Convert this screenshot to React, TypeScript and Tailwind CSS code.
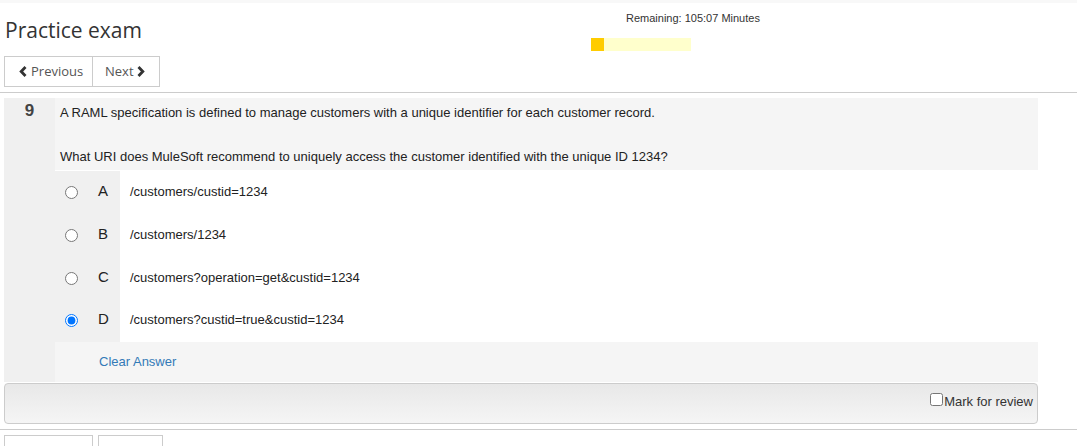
const ChevronLeft = () => (
  <svg width="8" height="11" viewBox="0 0 8 11" className="inline-block">
    <path d="M6.5 1 L2.2 5.5 L6.5 10" fill="none" stroke="#333" strokeWidth="2.8" />
  </svg>
);

const ChevronRight = () => (
  <svg width="8" height="11" viewBox="0 0 8 11" className="inline-block">
    <path d="M1.5 1 L5.8 5.5 L1.5 10" fill="none" stroke="#333" strokeWidth="2.8" />
  </svg>
);

const options = [
  { letter: "A", text: "/customers/custid=1234", checked: false, h: "h-[43px]" },
  { letter: "B", text: "/customers/1234", checked: false, h: "h-[43px]" },
  { letter: "C", text: "/customers?operation=get&custid=1234", checked: false, h: "h-[42px]" },
  { letter: "D", text: "/customers?custid=true&custid=1234", checked: true, h: "h-[43px]" },
];

export default function App() {
  return (
    <main className="w-[1077px] h-[446px] overflow-hidden bg-white text-[#222] font-['Liberation_Sans',Arial,sans-serif]">
      <div className="h-[3px] bg-[#f8f8f8]"></div>

      <header className="flex h-[53px]">
        <div className="w-[591px] pl-[5px] pt-[12px]">
          <h1 className="text-[21px] leading-[30px] text-[#333] font-['Open_Sans',sans-serif]">
            Practice exam
          </h1>
        </div>
        <div className="pt-[7px]">
          <div className="pl-[35px] text-[11px] leading-[16px] text-[#333]">
            Remaining: 105:07 Minutes
          </div>
          <div className="mt-[12px] flex w-[100px] h-[13px] bg-[#ffffcc]">
            <div className="w-[13px] bg-[#ffcc00]"></div>
          </div>
        </div>
      </header>

      <div className="flex pl-[4px] font-['Open_Sans',sans-serif] text-[13px] text-[#555]">
        <button className="flex items-center gap-[4px] h-[31px] w-[89px] pl-[14px] border border-[#ccc]">
          <ChevronLeft />
          Previous
        </button>
        <button className="flex items-center gap-[3px] h-[31px] w-[67px] pl-[12px] border border-l-0 border-[#ccc]">
          Next
          <ChevronRight />
        </button>
      </div>

      <div className="mt-[5px] h-px bg-[#ccc]"></div>

      <section className="mt-[5px] ml-[4px] w-[1034px] flex">
        <div className="w-[51px] bg-[#f0f0f0] pt-[3px] text-center text-[17px] leading-[20px] font-bold text-[#444]">
          9
        </div>
        <div className="flex-1 flex flex-col">
          <div className="bg-[#f5f5f5] pl-[5px] pt-[6px] pb-[4px] text-[13px] leading-[18px]">
            <p>A RAML specification is defined to manage customers with a unique identifier for each customer record.</p>
            <p className="mt-[26px]">What URI does MuleSoft recommend to uniquely access the customer identified with the unique ID 1234?</p>
          </div>
          <div className="h-px"></div>
          {options.map((o) => (
            <div key={o.letter} className={`flex ${o.h}`}>
              <div className="w-[65px] bg-[#f0f0f0] flex items-start">
                <input
                  type="radio"
                  name="answer"
                  defaultChecked={o.checked}
                  className="ml-[10px] mt-[15px] w-[13px] h-[13px]"
                />
                <span className="ml-[20px] pt-[11px] text-[15px] leading-[18px] text-[#222]">{o.letter}</span>
              </div>
              <div className="pl-[10px] pt-[12px] text-[13px] leading-[18px]">{o.text}</div>
            </div>
          ))}
          <div className="h-[40px] bg-[#f5f5f5] pl-[44px] pt-[11px] text-[13px] leading-[18px] text-[#337ab7]">
            Clear Answer
          </div>
        </div>
      </section>

      <div className="mt-px ml-[4px] w-[1034px] h-[41px] rounded-[4px] border border-[#ccc] bg-gradient-to-b from-[#e8e8e8] to-[#f5f5f5] flex items-center justify-end pr-[4px] pb-[3px]">
        <label className="flex items-start text-[13px] leading-[16px] text-[#333]">
          <input type="checkbox" className="w-[13px] h-[13px] -mt-px mr-px" />
          Mark for review
        </label>
      </div>

      <div className="mt-[5px] h-px bg-[#ccc]"></div>

      <div className="flex mt-[5px] pl-[4px] gap-[5px]">
        <div className="h-[31px] w-[89px] border border-[#ccc]"></div>
        <div className="h-[31px] w-[65px] border border-[#ccc]"></div>
      </div>
    </main>
  );
}
